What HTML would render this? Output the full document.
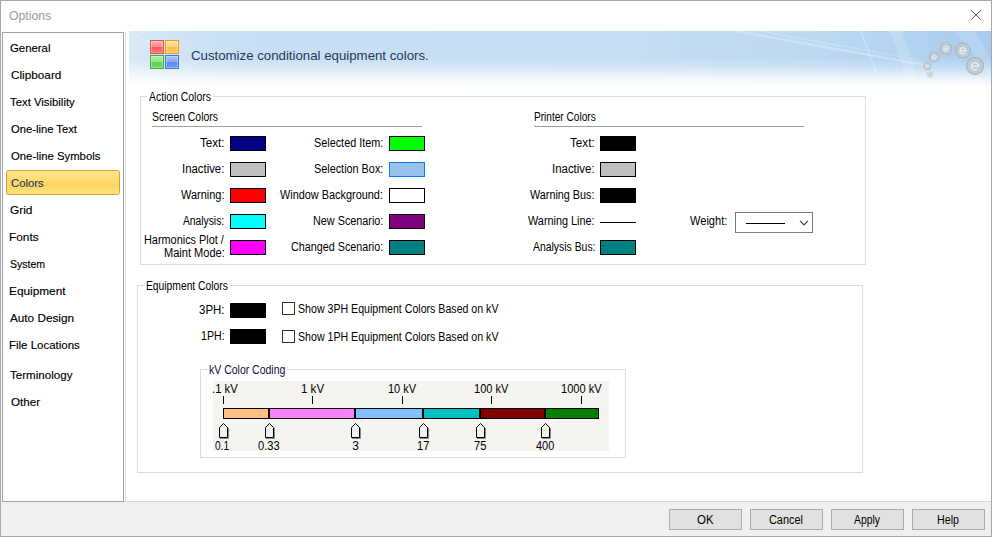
<!DOCTYPE html>
<html><head><meta charset="utf-8">
<style>
html,body{margin:0;padding:0;}
body{width:992px;height:537px;position:relative;overflow:hidden;background:#fff;font-family:"Liberation Sans",sans-serif;color:#000;}
.a{position:absolute;}
.t{position:absolute;white-space:nowrap;}
.sw{position:absolute;width:34px;height:13px;border:1px solid #000;}
.gb{position:absolute;border:1px solid #dcdcdc;box-sizing:border-box;}
.btn{position:absolute;top:509px;width:73px;height:21px;border:1px solid #adadad;background:#e1e1e1;box-sizing:border-box;}
</style></head><body>
<div class="a" style="left:0;top:0;width:992px;height:537px;border:1px solid #a8a8a8;box-sizing:border-box;"></div>
<svg class="a" style="left:970px;top:9px" width="12" height="12" viewBox="0 0 12 12"><path d="M1 1L11 11M11 1L1 11" stroke="#666" stroke-width="1"/></svg>
<div class="a" style="left:1px;top:501px;width:990px;height:35px;background:#f0f0f0;border-top:1px solid #dadada;box-sizing:border-box;"></div>
<div class="a" style="left:2px;top:32px;width:122px;height:470px;border:1px solid #a0a3ab;box-sizing:border-box;background:#fff;"></div>
<div class="a" style="left:125px;top:31px;width:1px;height:470px;background:#e3e3e3;"></div>
<div class="a" style="left:6px;top:170px;width:114px;height:25px;box-sizing:border-box;border:1px solid #d4a03c;border-radius:2.5px;background:linear-gradient(#fde48a 0%,#fddb72 40%,#fcd464 62%,#fee47a 100%);"></div>
<!-- header -->
<div class="a" style="left:129px;top:31px;width:862px;height:56px;background:linear-gradient(to bottom,rgba(255,255,255,0) 0%,rgba(255,255,255,0) 48%,rgba(255,255,255,0.22) 62%,rgba(255,255,255,0.6) 78%,rgba(255,255,255,0.9) 91%,#fff 100%),linear-gradient(to right,#dbeaf7 0%,#d1e4f5 5%,#c9dff3 14%,#c6ddf2 60%,#bcd8f1 80%,#a9cdef 100%);"></div>
<svg class="a" style="left:129px;top:31px" width="861" height="56" viewBox="0 0 861 56">
<g stroke="#fff" fill="none">
<path d="M607 0L796 34" stroke-width="2.5" stroke-opacity="0.25"/><path d="M631 0L790 29" stroke-width="1.2" stroke-opacity="0.25"/>
<path d="M732 0L752 54" stroke-width="1.2" stroke-opacity="0.3"/>
<path d="M0 2L45 20" stroke-width="2" stroke-opacity="0.18"/><path d="M10 0L60 18" stroke-width="1" stroke-opacity="0.15"/>
</g>
<polygon points="761,0 773,0 793,56 781,56" fill="#fff" fill-opacity="0.16"/>
<polygon points="826,0 846,0 862,28 862,48" fill="#fff" fill-opacity="0.12"/>

<g fill="none" stroke="#fff" stroke-opacity="0.6"></g>
</svg>
<svg class="a" style="left:148px;top:38px" width="34" height="34" viewBox="0 0 34 34">
<defs>
<linearGradient id="gr" x1="0" y1="0" x2="0" y2="1"><stop offset="0" stop-color="#ffb0b0"/><stop offset="0.5" stop-color="#ff8a8a"/><stop offset="0.5" stop-color="#ff5c5c"/><stop offset="1" stop-color="#ff6e6e"/></linearGradient>
<linearGradient id="go" x1="0" y1="0" x2="0" y2="1"><stop offset="0" stop-color="#ffe0a0"/><stop offset="0.5" stop-color="#ffd27a"/><stop offset="0.5" stop-color="#ffbf50"/><stop offset="1" stop-color="#ffc860"/></linearGradient>
<linearGradient id="gg" x1="0" y1="0" x2="0" y2="1"><stop offset="0" stop-color="#b0f0a0"/><stop offset="0.5" stop-color="#8ee67e"/><stop offset="0.5" stop-color="#5cd450"/><stop offset="1" stop-color="#6cdc60"/></linearGradient>
<linearGradient id="gb" x1="0" y1="0" x2="0" y2="1"><stop offset="0" stop-color="#a8c4ff"/><stop offset="0.5" stop-color="#88aaf8"/><stop offset="0.5" stop-color="#5a8cf0"/><stop offset="1" stop-color="#6a98f4"/></linearGradient>
</defs>
<rect x="2.5" y="2.5" width="13" height="13" fill="url(#gr)" stroke="#dc5555"/><rect x="3.5" y="3.5" width="11" height="11" fill="none" stroke="#fff" stroke-opacity="0.3"/>
<rect x="17.5" y="2.5" width="13" height="13" fill="url(#go)" stroke="#e8a018"/><rect x="18.5" y="3.5" width="11" height="11" fill="none" stroke="#fff" stroke-opacity="0.3"/>
<rect x="2.5" y="17.5" width="13" height="13" fill="url(#gg)" stroke="#4aa84a"/><rect x="3.5" y="18.5" width="11" height="11" fill="none" stroke="#fff" stroke-opacity="0.3"/>
<rect x="17.5" y="17.5" width="13" height="13" fill="url(#gb)" stroke="#4a78d0"/><rect x="18.5" y="18.5" width="11" height="11" fill="none" stroke="#fff" stroke-opacity="0.3"/>
</svg>
<svg class="a" style="left:915px;top:36px" width="75" height="46" viewBox="915 36 75 46">
<defs><radialGradient id="sp" cx="0.5" cy="0.5" r="0.5"><stop offset="0" stop-color="#c3ccd5"/><stop offset="0.55" stop-color="#bcc6d0"/><stop offset="0.8" stop-color="#c8d0d8"/><stop offset="0.9" stop-color="#a8b3be"/><stop offset="1" stop-color="#9aa6b2" stop-opacity="0.7"/></radialGradient></defs>
<g fill="url(#sp)">
<circle cx="975" cy="66" r="9"/><circle cx="963" cy="50.5" r="7.8"/><circle cx="946" cy="48.5" r="6.3"/><circle cx="934.3" cy="57" r="5.4"/><circle cx="927.4" cy="66" r="4"/><circle cx="929.8" cy="74.5" r="3.1" opacity="0.6"/>
</g>
<g fill="none" stroke="#eef2f6" stroke-opacity="0.85" stroke-linecap="round">
<path d="M971.4 66.3H978.6A3.6 3.6 0 1 0 977.4 69" stroke-width="1.6"/>
<path d="M959.9 50.8H966.1A3.1 3.1 0 1 0 965 53.1" stroke-width="1.4"/>
<path d="M943.5 48.8H948.5A2.5 2.5 0 1 0 947.6 50.6" stroke-width="1.2"/>
<path d="M932.1 57.2H936.5A2.2 2.2 0 1 0 935.7 58.8" stroke-width="1"/>
<path d="M925.8 66.1H929A1.6 1.6 0 1 0 928.5 67.3" stroke-width="0.8"/>
</g>
</svg>


<div class="gb" style="left:140px;top:96px;width:726px;height:169px;"></div>
<div class="a" style="left:147px;top:90px;width:66px;height:12px;background:#fff"></div>
<div class="a" style="left:152px;top:126px;width:270px;height:1px;background:#a0a0a0;"></div>
<div class="a" style="left:534px;top:126px;width:270px;height:1px;background:#a0a0a0;"></div>
<div class="sw" style="left:230px;top:136px;background:#000080"></div>
<div class="sw" style="left:389px;top:136px;background:#00ff00"></div>
<div class="sw" style="left:600px;top:136px;background:#000000"></div>
<div class="sw" style="left:230px;top:162px;background:#c0c0c0"></div>
<div class="sw" style="left:389px;top:162px;background:#99c2ea;border-color:#0a78ff"></div>
<div class="sw" style="left:600px;top:162px;background:#c0c0c0"></div>
<div class="sw" style="left:230px;top:188px;background:#ff0000"></div>
<div class="sw" style="left:389px;top:188px;background:#ffffff"></div>
<div class="sw" style="left:600px;top:188px;background:#000000"></div>
<div class="sw" style="left:230px;top:214px;background:#00ffff"></div>
<div class="sw" style="left:389px;top:214px;background:#800080"></div>
<div class="a" style="left:600px;top:222px;width:36px;height:1px;background:#000"></div>
<div class="sw" style="left:230px;top:240px;background:#ff00ff"></div>
<div class="sw" style="left:389px;top:240px;background:#008080"></div>
<div class="sw" style="left:600px;top:240px;background:#008080"></div>
<div class="a" style="left:735px;top:212px;width:78px;height:21px;border:1px solid #7a7a7a;box-sizing:border-box;background:#fff"></div>
<div class="a" style="left:746px;top:223px;width:39px;height:1px;background:#000"></div>
<svg class="a" style="left:799px;top:220px" width="10" height="6" viewBox="0 0 10 6"><path d="M1 0.8L5 4.8L9 0.8" fill="none" stroke="#404040" stroke-width="1.2"/></svg>
<div class="gb" style="left:137px;top:285px;width:726px;height:188px;"></div>
<div class="a" style="left:144px;top:279px;width:86px;height:12px;background:#fff"></div>
<div class="sw" style="left:230px;top:303px;background:#000"></div>
<div class="sw" style="left:230px;top:329px;background:#000"></div>
<div class="a" style="left:282px;top:302px;width:13px;height:13px;border:1px solid #333;box-sizing:border-box;background:#fff"></div>
<div class="a" style="left:282px;top:330px;width:13px;height:13px;border:1px solid #333;box-sizing:border-box;background:#fff"></div>
<div class="gb" style="left:200px;top:369px;width:426px;height:89px;"></div>
<div class="a" style="left:207px;top:363px;width:80px;height:12px;background:#fff"></div>
<div class="a" style="left:213px;top:381px;width:396px;height:70px;background:#f5f4f1"></div>
<div class="a" style="left:223px;top:396px;width:1px;height:8px;background:#000"></div>
<div class="a" style="left:312px;top:396px;width:1px;height:8px;background:#000"></div>
<div class="a" style="left:402px;top:396px;width:1px;height:8px;background:#000"></div>
<div class="a" style="left:491px;top:396px;width:1px;height:8px;background:#000"></div>
<div class="a" style="left:581px;top:396px;width:1px;height:8px;background:#000"></div>
<div class="a" style="left:223px;top:408px;width:376px;height:11px;background:#000"></div>
<div class="a" style="left:224px;top:409px;width:44px;height:9px;background:#ffc080"></div>
<div class="a" style="left:270px;top:409px;width:84px;height:9px;background:#ff80ff"></div>
<div class="a" style="left:356px;top:409px;width:66px;height:9px;background:#80c0ff"></div>
<div class="a" style="left:424px;top:409px;width:55px;height:9px;background:#00c0c0"></div>
<div class="a" style="left:481px;top:409px;width:63px;height:9px;background:#800000"></div>
<div class="a" style="left:546px;top:409px;width:52px;height:9px;background:#008000"></div>
<svg class="a" style="left:218px;top:422px" width="12" height="17" viewBox="0 0 12 17"><path d="M1.5 15.5V5.5L5.5 1.5L9.5 5.5V15.5Z" fill="#f0f0f0" stroke="#000" stroke-width="1"/><path d="M10.5 6V16.5H2" fill="none" stroke="#888" stroke-width="1"/></svg>
<svg class="a" style="left:264px;top:422px" width="12" height="17" viewBox="0 0 12 17"><path d="M1.5 15.5V5.5L5.5 1.5L9.5 5.5V15.5Z" fill="#f0f0f0" stroke="#000" stroke-width="1"/><path d="M10.5 6V16.5H2" fill="none" stroke="#888" stroke-width="1"/></svg>
<svg class="a" style="left:350px;top:422px" width="12" height="17" viewBox="0 0 12 17"><path d="M1.5 15.5V5.5L5.5 1.5L9.5 5.5V15.5Z" fill="#f0f0f0" stroke="#000" stroke-width="1"/><path d="M10.5 6V16.5H2" fill="none" stroke="#888" stroke-width="1"/></svg>
<svg class="a" style="left:418px;top:422px" width="12" height="17" viewBox="0 0 12 17"><path d="M1.5 15.5V5.5L5.5 1.5L9.5 5.5V15.5Z" fill="#f0f0f0" stroke="#000" stroke-width="1"/><path d="M10.5 6V16.5H2" fill="none" stroke="#888" stroke-width="1"/></svg>
<svg class="a" style="left:475px;top:422px" width="12" height="17" viewBox="0 0 12 17"><path d="M1.5 15.5V5.5L5.5 1.5L9.5 5.5V15.5Z" fill="#f0f0f0" stroke="#000" stroke-width="1"/><path d="M10.5 6V16.5H2" fill="none" stroke="#888" stroke-width="1"/></svg>
<svg class="a" style="left:540px;top:422px" width="12" height="17" viewBox="0 0 12 17"><path d="M1.5 15.5V5.5L5.5 1.5L9.5 5.5V15.5Z" fill="#f0f0f0" stroke="#000" stroke-width="1"/><path d="M10.5 6V16.5H2" fill="none" stroke="#888" stroke-width="1"/></svg>
<div class="btn" style="left:669px"></div>
<div class="btn" style="left:750px"></div>
<div class="btn" style="left:831px"></div>
<div class="btn" style="left:912px"></div>
<div class="t" id="t0" style="left:9.08px;top:9px;font-size:12px;line-height:14px;letter-spacing:0.000px;color:#9a9aa2;transform:scaleX(1.0222);transform-origin:0 0;">Options</div>
<div class="t" id="t1" style="left:9.75px;top:41px;font-size:11.5px;line-height:14px;letter-spacing:0.000px;color:#000;transform:scaleX(0.9887);transform-origin:0 0;-webkit-text-stroke:0.15px currentColor">General</div>
<div class="t" id="t2" style="left:10.92px;top:68px;font-size:11.5px;line-height:14px;letter-spacing:0.000px;color:#000;transform:scaleX(1.0229);transform-origin:0 0;-webkit-text-stroke:0.15px currentColor">Clipboard</div>
<div class="t" id="t3" style="left:10.06px;top:95px;font-size:11.5px;line-height:14px;letter-spacing:0.000px;color:#000;transform:scaleX(0.9864);transform-origin:0 0;-webkit-text-stroke:0.15px currentColor">Text Visibility</div>
<div class="t" id="t4" style="left:11.09px;top:122px;font-size:11.5px;line-height:14px;letter-spacing:0.000px;color:#000;transform:scaleX(0.9763);transform-origin:0 0;-webkit-text-stroke:0.15px currentColor">One-line Text</div>
<div class="t" id="t5" style="left:11.03px;top:149px;font-size:11.5px;line-height:14px;letter-spacing:0.000px;color:#000;transform:scaleX(0.9845);transform-origin:0 0;-webkit-text-stroke:0.15px currentColor">One-line Symbols</div>
<div class="t" id="t6" style="left:10.67px;top:176px;font-size:11.5px;line-height:14px;letter-spacing:0.000px;color:#1e395b;transform:scaleX(0.9787);transform-origin:0 0;-webkit-text-stroke:0.15px currentColor">Colors</div>
<div class="t" id="t7" style="left:10.46px;top:203px;font-size:11.5px;line-height:14px;letter-spacing:0.000px;color:#000;transform:scaleX(1.0326);transform-origin:0 0;-webkit-text-stroke:0.15px currentColor">Grid</div>
<div class="t" id="t8" style="left:9.19px;top:230px;font-size:11.5px;line-height:14px;letter-spacing:0.000px;color:#000;transform:scaleX(1.0288);transform-origin:0 0;-webkit-text-stroke:0.15px currentColor">Fonts</div>
<div class="t" id="t9" style="left:9.84px;top:257px;font-size:11.5px;line-height:14px;letter-spacing:0.000px;color:#000;transform:scaleX(0.9169);transform-origin:0 0;-webkit-text-stroke:0.15px currentColor">System</div>
<div class="t" id="t10" style="left:9.48px;top:284px;font-size:11.5px;line-height:14px;letter-spacing:0.000px;color:#000;transform:scaleX(1.0284);transform-origin:0 0;-webkit-text-stroke:0.15px currentColor">Equipment</div>
<div class="t" id="t11" style="left:10.19px;top:311px;font-size:11.5px;line-height:14px;letter-spacing:0.000px;color:#000;transform:scaleX(1.0205);transform-origin:0 0;-webkit-text-stroke:0.15px currentColor">Auto Design</div>
<div class="t" id="t12" style="left:9.07px;top:338px;font-size:11.5px;line-height:14px;letter-spacing:0.000px;color:#000;transform:scaleX(0.9978);transform-origin:0 0;-webkit-text-stroke:0.15px currentColor">File Locations</div>
<div class="t" id="t13" style="left:10.14px;top:368px;font-size:11.5px;line-height:14px;letter-spacing:0.000px;color:#000;transform:scaleX(1.0072);transform-origin:0 0;-webkit-text-stroke:0.15px currentColor">Terminology</div>
<div class="t" id="t14" style="left:10.70px;top:395px;font-size:11.5px;line-height:14px;letter-spacing:0.000px;color:#000;transform:scaleX(1.0136);transform-origin:0 0;-webkit-text-stroke:0.15px currentColor">Other</div>
<div class="t" id="t15" style="left:191.00px;top:48px;font-size:13.34px;line-height:16px;letter-spacing:0.000px;color:#1e395b;transform:scaleX(0.9934);transform-origin:0 0;">Customize conditional equipment colors.</div>
<div class="t" id="t16" style="left:148.51px;top:91px;font-size:12px;line-height:13px;letter-spacing:0.000px;color:#000;transform:scaleX(0.8670);transform-origin:0 0;">Action Colors</div>
<div class="t" id="t17" style="left:151.70px;top:111px;font-size:12px;line-height:13px;letter-spacing:0.000px;color:#000;transform:scaleX(0.8667);transform-origin:0 0;">Screen Colors</div>
<div class="t" id="t18" style="left:533.70px;top:111px;font-size:12px;line-height:13px;letter-spacing:0.000px;color:#000;transform:scaleX(0.8409);transform-origin:0 0;">Printer Colors</div>
<div class="t" id="t19" style="left:200.05px;top:137px;font-size:12px;line-height:13px;letter-spacing:0.000px;color:#000;transform:scaleX(0.9706);transform-origin:0 0;">Text:</div>
<div class="t" id="t20" style="left:181.89px;top:163px;font-size:12px;line-height:13px;letter-spacing:0.000px;color:#000;transform:scaleX(0.9470);transform-origin:0 0;">Inactive:</div>
<div class="t" id="t21" style="left:180.91px;top:189px;font-size:12px;line-height:13px;letter-spacing:0.000px;color:#000;transform:scaleX(0.9143);transform-origin:0 0;">Warning:</div>
<div class="t" id="t22" style="left:183.05px;top:215px;font-size:12px;line-height:13px;letter-spacing:0.000px;color:#000;transform:scaleX(0.8571);transform-origin:0 0;">Analysis:</div>
<div class="t" id="t23" style="left:144.29px;top:234px;font-size:12px;line-height:13px;letter-spacing:0.000px;color:#000;transform:scaleX(0.9074);transform-origin:0 0;">Harmonics Plot /</div>
<div class="t" id="t24" style="left:164.04px;top:247px;font-size:12px;line-height:13px;letter-spacing:0.000px;color:#000;transform:scaleX(0.9210);transform-origin:0 0;">Maint Mode:</div>
<div class="t" id="t25" style="left:314.49px;top:137px;font-size:12px;line-height:13px;letter-spacing:0.000px;color:#000;transform:scaleX(0.9036);transform-origin:0 0;">Selected Item:</div>
<div class="t" id="t26" style="left:314.49px;top:163px;font-size:12px;line-height:13px;letter-spacing:0.000px;color:#000;transform:scaleX(0.9036);transform-origin:0 0;">Selection Box:</div>
<div class="t" id="t27" style="left:280.07px;top:189px;font-size:12px;line-height:13px;letter-spacing:0.000px;color:#000;transform:scaleX(0.9077);transform-origin:0 0;">Window Background:</div>
<div class="t" id="t28" style="left:312.99px;top:215px;font-size:12px;line-height:13px;letter-spacing:0.000px;color:#000;transform:scaleX(0.9019);transform-origin:0 0;">New Scenario:</div>
<div class="t" id="t29" style="left:290.75px;top:241px;font-size:12px;line-height:13px;letter-spacing:0.000px;color:#000;transform:scaleX(0.8975);transform-origin:0 0;">Changed Scenario:</div>
<div class="t" id="t30" style="left:569.75px;top:137px;font-size:12px;line-height:13px;letter-spacing:0.000px;color:#000;transform:scaleX(0.9718);transform-origin:0 0;">Text:</div>
<div class="t" id="t31" style="left:552.05px;top:163px;font-size:12px;line-height:13px;letter-spacing:0.000px;color:#000;transform:scaleX(0.9529);transform-origin:0 0;">Inactive:</div>
<div class="t" id="t32" style="left:530.44px;top:189px;font-size:12px;line-height:13px;letter-spacing:0.000px;color:#000;transform:scaleX(0.9008);transform-origin:0 0;">Warning Bus:</div>
<div class="t" id="t33" style="left:528.12px;top:215px;font-size:12px;line-height:13px;letter-spacing:0.000px;color:#000;transform:scaleX(0.9044);transform-origin:0 0;">Warning Line:</div>
<div class="t" id="t34" style="left:532.54px;top:241px;font-size:12px;line-height:13px;letter-spacing:0.000px;color:#000;transform:scaleX(0.8675);transform-origin:0 0;">Analysis Bus:</div>
<div class="t" id="t35" style="left:689.95px;top:215px;font-size:12px;line-height:13px;letter-spacing:0.000px;color:#000;transform:scaleX(0.9216);transform-origin:0 0;">Weight:</div>
<div class="t" id="t36" style="left:145.80px;top:280px;font-size:12px;line-height:13px;letter-spacing:0.000px;color:#000;transform:scaleX(0.8578);transform-origin:0 0;">Equipment Colors</div>
<div class="t" id="t37" style="left:199.28px;top:304px;font-size:12px;line-height:13px;letter-spacing:0.000px;color:#000;transform:scaleX(0.9553);transform-origin:0 0;">3PH:</div>
<div class="t" id="t38" style="left:201.00px;top:330px;font-size:12px;line-height:13px;letter-spacing:0.000px;color:#000;transform:scaleX(0.8862);transform-origin:0 0;">1PH:</div>
<div class="t" id="t39" style="left:297.65px;top:303px;font-size:12px;line-height:13px;letter-spacing:0.000px;color:#000;transform:scaleX(0.8841);transform-origin:0 0;">Show 3PH Equipment Colors Based on kV</div>
<div class="t" id="t40" style="left:297.65px;top:331px;font-size:12px;line-height:13px;letter-spacing:0.000px;color:#000;transform:scaleX(0.8841);transform-origin:0 0;">Show 1PH Equipment Colors Based on kV</div>
<div class="t" id="t41" style="left:208.90px;top:364px;font-size:12px;line-height:13px;letter-spacing:0.000px;color:#101040;transform:scaleX(0.8738);transform-origin:0 0;">kV Color Coding</div>
<div class="t" id="t42" style="left:212.34px;top:383px;font-size:12px;line-height:13px;letter-spacing:0.000px;color:#000;transform:scaleX(0.9421);transform-origin:0 0;">.1 kV</div>
<div class="t" id="t43" style="left:300.79px;top:383px;font-size:12px;line-height:13px;letter-spacing:0.000px;color:#000;transform:scaleX(0.9614);transform-origin:0 0;">1 kV</div>
<div class="t" id="t44" style="left:388.14px;top:383px;font-size:12px;line-height:13px;letter-spacing:0.000px;color:#000;transform:scaleX(0.9167);transform-origin:0 0;">10 kV</div>
<div class="t" id="t45" style="left:473.84px;top:383px;font-size:12px;line-height:13px;letter-spacing:0.000px;color:#000;transform:scaleX(0.9185);transform-origin:0 0;">100 kV</div>
<div class="t" id="t46" style="left:560.56px;top:383px;font-size:12px;line-height:13px;letter-spacing:0.000px;color:#000;transform:scaleX(0.9232);transform-origin:0 0;">1000 kV</div>
<div class="t" id="t47" style="left:215.48px;top:440px;font-size:12px;line-height:13px;letter-spacing:0.000px;color:#000;transform:scaleX(0.8396);transform-origin:0 0;">0.1</div>
<div class="t" id="t48" style="left:258.16px;top:440px;font-size:12px;line-height:13px;letter-spacing:0.000px;color:#000;transform:scaleX(0.9271);transform-origin:0 0;">0.33</div>
<div class="t" id="t49" style="left:352.13px;top:440px;font-size:12px;line-height:13px;letter-spacing:0.000px;color:#000;">3</div>
<div class="t" id="t50" style="left:417.14px;top:440px;font-size:12px;line-height:13px;letter-spacing:0.000px;color:#000;transform:scaleX(0.9179);transform-origin:0 0;">17</div>
<div class="t" id="t51" style="left:474.09px;top:440px;font-size:12px;line-height:13px;letter-spacing:0.000px;color:#000;transform:scaleX(0.9233);transform-origin:0 0;">75</div>
<div class="t" id="t52" style="left:536.36px;top:440px;font-size:12px;line-height:13px;letter-spacing:0.000px;color:#000;transform:scaleX(0.9090);transform-origin:0 0;">400</div>
<div class="t" id="t53" style="left:697.02px;top:514px;font-size:12px;line-height:13px;letter-spacing:0.000px;color:#000;transform:scaleX(0.9564);transform-origin:0 0;">OK</div>
<div class="t" id="t54" style="left:769.00px;top:514px;font-size:12px;line-height:13px;letter-spacing:0.000px;color:#000;transform:scaleX(0.9087);transform-origin:0 0;">Cancel</div>
<div class="t" id="t55" style="left:853.85px;top:514px;font-size:12px;line-height:13px;letter-spacing:0.000px;color:#000;transform:scaleX(0.8630);transform-origin:0 0;">Apply</div>
<div class="t" id="t56" style="left:937.05px;top:514px;font-size:12px;line-height:13px;letter-spacing:0.000px;color:#000;transform:scaleX(0.8883);transform-origin:0 0;">Help</div>
</body></html>
